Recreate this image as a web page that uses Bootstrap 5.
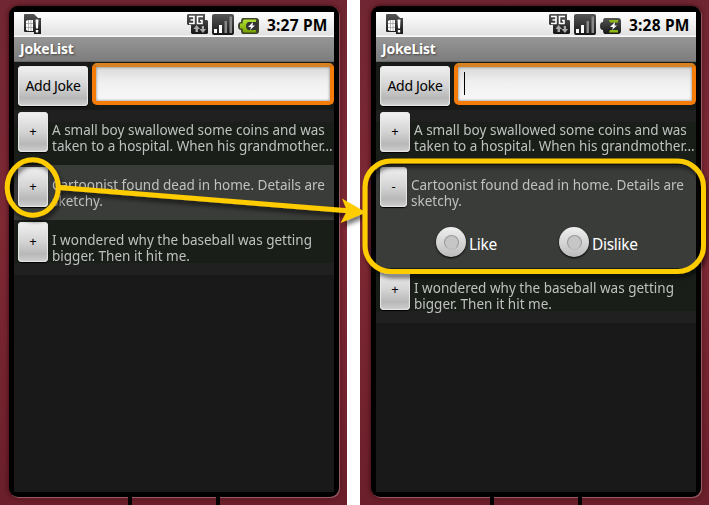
<!DOCTYPE html>
<html lang="en">
<head>
<meta charset="utf-8">
<meta name="viewport" content="width=device-width, initial-scale=1">
<title>JokeList</title>
<link href="https://cdn.jsdelivr.net/npm/bootstrap@5.3.0/dist/css/bootstrap.min.css" rel="stylesheet">
<style>
body{width:709px;height:505px;overflow:hidden;background:#fff;font-family:"Noto Sans","Open Sans",sans-serif}
.phone{height:505px;background:linear-gradient(#702632,#7e2934 45%,#6a1f2a);padding-top:6px}
.phone-a{width:347px;padding-left:9px}
.phone-b{width:349px;padding-left:11px}
.bezel{width:330px;height:491px;background:#000;border-radius:9px;padding:6px 5px 5px;box-shadow:1px 1px 1px #a0606a,0 0 5px #35090f}
.screen{width:320px;height:480px;background:#191919}
.statusbar{height:25px;background:linear-gradient(#fff,#eee 55%,#e2e2e2 90%,#fff);padding:2px 7px 0 10px}
.clock{font-size:15.5px;line-height:22px;font-weight:700;color:#000;letter-spacing:.2px;width:60px}
.titlebar{height:25px;background:linear-gradient(#969696,#7d7d7d);border-bottom:1px solid #686868;color:#fff;font-weight:700;font-size:14px;line-height:24px;letter-spacing:-.25px;padding-left:6px;text-shadow:1px 1px 2px #444}
.entry{height:48px;background:#181a18;padding:1px 0 0 4px}
.key{background:linear-gradient(#f1f1f1,#d3d3d3 50%,#b8b8b8 80%,#cfcfcf);border:0;border-radius:4px;box-shadow:0 1px 1px #000,inset 0 0 1px 1px #e8e8e8;color:#000;height:40px;padding:0 0 2px;flex:none}
.key-add{width:70px;margin-top:3px;font-size:14px;letter-spacing:-.3px}
.key-tog{width:30px;font-size:13px;line-height:38px;margin-top:2px}
.key-minus{width:27px}
.field{width:242px;height:42px;margin-left:4px;border:4px solid #f57c08;border-top-color:#d88322;border-radius:5px;background:linear-gradient(#d9d9d9,#f0f0f0 45%,#f8f8f8);box-shadow:inset 0 0 3px #777;padding:5px 0 0 6px}
.caret{width:1px;height:23px;background:#000}
.joke{height:55px;padding-left:4px;color:#bfc1bf}
.joke-first{background:linear-gradient(#202020 12px,#191e19 12px)}
.joke-on{background:#3a3c39}
.joke-open{height:103px}
.joke-last{background:linear-gradient(#191e19 43px,#202020 43px)}
.joke-text{font-size:14px;line-height:16px;padding:12px 0 0 4px;white-space:nowrap}
.joke-text span{display:block;transform:scaleX(.965);transform-origin:0 0}
.votes{padding:18px 0 0 56px}
.vote{font-size:15.5px;line-height:30px;color:#fff;letter-spacing:-.3px}
.vote-like{width:123px}
.vote-name{padding:3px 0 0 3px;line-height:28px}
.knob{width:30px;height:30px;border-radius:50%;background:linear-gradient(#f0eff0,#d2d1d2 60%,#bbb);box-shadow:0 1px 2px #000}
.knob i{width:15px;height:15px;border-radius:50%;background:#c6c6c6;border:1.5px solid #999;border-bottom-color:#b9b9b9}
.tick{width:4px;height:8px;background:#000}
.ticks{padding-left:119px;gap:84px}
.notes{left:0;top:0;pointer-events:none}
</style>
<script src="https://cdn.jsdelivr.net/npm/bootstrap@5.3.0/dist/js/bootstrap.bundle.min.js"></script>
</head>
<body>
<svg width="0" height="0" class="position-absolute">
<defs>
<linearGradient id="dark" x2="0" y2="1"><stop stop-color="#555"/><stop offset="1" stop-color="#161616"/></linearGradient>
<linearGradient id="lime" x2="0" y2="1"><stop stop-color="#b2e235"/><stop offset="1" stop-color="#76a000"/></linearGradient>
<symbol id="sim" viewBox="0 0 18 21"><path d="M1 0H10L14 4H17V20H10V18H1Q0 18 0 17V1Q0 0 1 0Z" fill="url(#dark)"/><path d="M2 7l2-1h5v11H4l-2-1Z" fill="#fff"/><path d="M2 9.500H9M2 13.500H9M4.500 6V17M7 6V17" stroke="#999" stroke-width=".7"/><path d="M11.500 5.500h3l-.5 9h-2zM11.800 16h2.400v2.500h-2.400z" fill="#fff"/></symbol>
<symbol id="net" viewBox="0 0 21 21"><path d="M1 0H18V6H20L21 7V19L20 20H5L4 19V11H1L0 10V1Z" fill="url(#dark)"/><path d="M2 2.500H7V9.500H2M3.500 6H7M16 2.500H10.500V9.500H15V6.500H13" fill="none" stroke="#fff" stroke-width="1.600"/><path d="M9.500 11L13 15H11V18H8.500V15H6.500ZM16 19L12.500 15H14.800V12H17V15H19Z" fill="#aaa"/></symbol>
<symbol id="sig" viewBox="0 0 22 21"><rect width="22" height="21" rx="2" fill="url(#dark)"/><path d="M2 15h3v4H2zM7 11h3v8H7z" fill="#fff"/><path d="M12.500 7h2.500v12h-2.500zM17.500 2.500H20V19h-2.500z" fill="#888"/></symbol>
<symbol id="batt-full" viewBox="0 0 21 16"><path d="M5 0H18Q21 0 21 3V13Q21 16 18 16H5Q3 16 3 12Q0 12 0 8Q0 4 3 4Q3 0 5 0Z" fill="#3c4229"/><path d="M6 1.500H18V4H11Q8 5 8 8Q8 11 11 12H18V14.500H6Q4.500 14 4.500 10.500H2V5.500H4.500Q4.500 2 6 1.500Z" fill="url(#lime)"/><path d="M10 4H19.500V12H10Q8.500 11 8.500 8Q8.500 5 10 4Z" fill="#333"/><path d="M15 4L10 9H13L12 12L17 7.500H14.500Z" fill="#fff"/></symbol>
<symbol id="batt-low" viewBox="0 0 21 16"><path d="M5 0H18Q21 0 21 3V13Q21 16 18 16H5Q3 16 3 12Q0 12 0 8Q0 4 3 4Q3 0 5 0Z" fill="url(#dark)"/><path d="M9 2H18V4.500H10ZM10 12H18V14.500H9Z" fill="#8db915"/><path d="M15 4L10 9H13L12 12L17 7.500H14.500Z" fill="#fff"/></symbol>
</defs></svg>
<main class="d-flex justify-content-between">
<section class="phone phone-a">
 <div class="bezel"><div class="screen overflow-hidden">
  <div class="statusbar d-flex align-items-start">
   <svg width="18" height="21"><use href="#sim"/></svg>
   <svg class="ms-auto" width="21" height="21"><use href="#net"/></svg>
   <svg class="ms-1" width="22" height="21"><use href="#sig"/></svg>
   <svg class="ms-1 mt-1 me-2" width="21" height="16"><use href="#batt-full"/></svg>
   <div class="clock text-nowrap">3:27 PM</div>
  </div>
  <div class="titlebar">JokeList</div>
  <div class="entry d-flex"><button class="key key-add">Add Joke</button><div class="field"></div></div>
  <div class="joke joke-first d-flex align-items-start"><button class="key key-tog">+</button>
   <div class="joke-text"><span>A small boy swallowed some coins and was</span><span>taken to a hospital. When his grandmother...</span></div></div>
  <div class="joke joke-on d-flex align-items-start"><button class="key key-tog">+</button>
   <div class="joke-text"><span>Cartoonist found dead in home. Details are</span><span>sketchy.</span></div></div>
  <div class="joke joke-last d-flex align-items-start"><button class="key key-tog">+</button>
   <div class="joke-text"><span>I wondered why the baseball was getting</span><span>bigger. Then it hit me.</span></div></div>
 </div></div>
 <div class="ticks d-flex"><div class="tick"></div><div class="tick"></div></div>
</section>
<section class="phone phone-b">
 <div class="bezel"><div class="screen overflow-hidden">
  <div class="statusbar d-flex align-items-start">
   <svg width="18" height="21"><use href="#sim"/></svg>
   <svg class="ms-auto" width="21" height="21"><use href="#net"/></svg>
   <svg class="ms-1" width="22" height="21"><use href="#sig"/></svg>
   <svg class="ms-1 mt-1 me-2" width="21" height="16"><use href="#batt-low"/></svg>
   <div class="clock text-nowrap">3:28 PM</div>
  </div>
  <div class="titlebar">JokeList</div>
  <div class="entry d-flex"><button class="key key-add">Add Joke</button><div class="field"><div class="caret"></div></div></div>
  <div class="joke joke-first d-flex align-items-start"><button class="key key-tog">+</button>
   <div class="joke-text"><span>A small boy swallowed some coins and was</span><span>taken to a hospital. When his grandmother...</span></div></div>
  <div class="joke joke-on joke-open">
   <div class="d-flex align-items-start"><button class="key key-tog key-minus">-</button>
    <div class="joke-text"><span>Cartoonist found dead in home. Details are</span><span>sketchy.</span></div></div>
   <div class="votes d-flex">
    <div class="vote vote-like d-flex"><div class="knob d-flex align-items-center justify-content-center"><i></i></div><div class="vote-name">Like</div></div>
    <div class="vote d-flex"><div class="knob d-flex align-items-center justify-content-center"><i></i></div><div class="vote-name">Dislike</div></div>
   </div></div>
  <div class="joke joke-last d-flex align-items-start"><button class="key key-tog">+</button>
   <div class="joke-text"><span>I wondered why the baseball was getting</span><span>bigger. Then it hit me.</span></div></div>
 </div></div>
 <div class="ticks d-flex"><div class="tick"></div><div class="tick"></div></div>
</section>
</main>
<svg class="notes position-absolute" width="709" height="505">
<defs><filter id="sh" x="-10%" y="-20%" width="120%" height="150%"><feDropShadow dx="2" dy="4" stdDeviation="2" flood-opacity=".55"/></filter></defs>
<g filter="url(#sh)"><g fill="none" stroke="#fc0" stroke-width="5">
<ellipse cx="32.700" cy="187.500" rx="25.500" ry="27.700"/>
<path d="M59 187.500L348 210.700"/>
<rect x="365" y="161" width="338.500" height="110.500" rx="26"/></g>
<path d="M366 212.500L342 198.500L347 211L340.500 223Z" fill="#fc0"/></g>
</svg>
</body>
</html>
